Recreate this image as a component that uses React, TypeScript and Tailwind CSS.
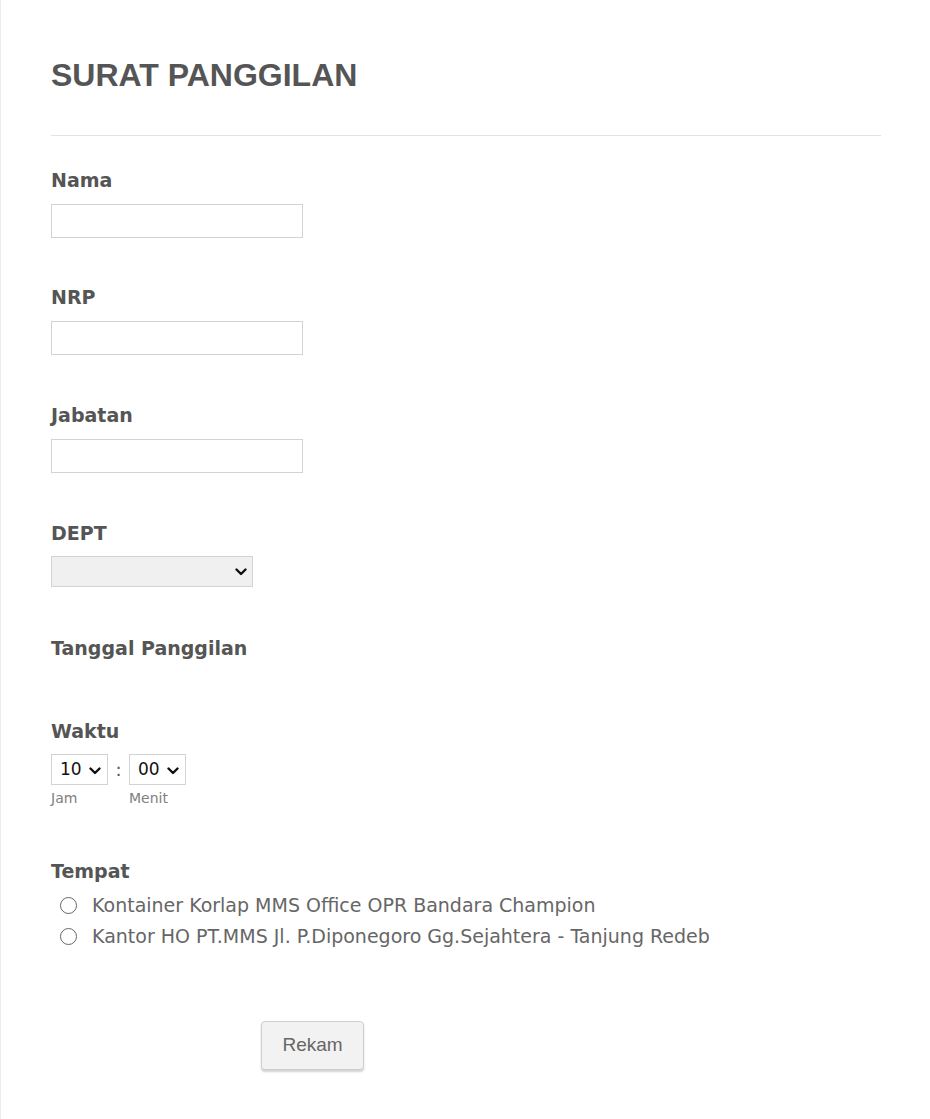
import React from "react";

const labelCls =
  "block text-[19px] leading-[24px] font-bold text-[#555] font-['DejaVu_Sans',Verdana,sans-serif]";

const Chevron = () => (
  <svg viewBox="0 0 12 8" className="w-[12px] h-[8px]" fill="none">
    <polyline points="1.5 1.5 6 6 10.5 1.5" stroke="#111" strokeWidth="2.4" strokeLinecap="round" strokeLinejoin="round" />
  </svg>
);

const TextField = ({ label, top }: { label: string; top: string }) => (
  <div className={top}>
    <label className={labelCls}>{label}</label>
    <input
      type="text"
      className="mt-[12px] block w-[252px] h-[34px] border border-[#d3d3d3] bg-white outline-none"
    />
  </div>
);

const SmallSelect = ({ value }: { value: string }) => (
  <div className="relative w-[57px] h-[31px] border border-[#d3d3d3] bg-white flex items-center">
    <span className="pl-[8px] text-[17px] text-[#111] font-['DejaVu_Sans',Verdana,sans-serif]">{value}</span>
    <span className="absolute right-[6px] top-[12px]">
      <Chevron />
    </span>
  </div>
);

const Radio = ({ text }: { text: string }) => (
  <label className="flex items-center h-[31px] pl-[9px]">
    <span className="w-[17px] h-[17px] rounded-full border border-[#666] bg-white" />
    <span className="ml-[15px] text-[19px] text-[#666] font-['DejaVu_Sans',Verdana,sans-serif]">{text}</span>
  </label>
);

export default function App() {
  return (
    <div className="min-h-[1119px] bg-white border-l border-[#ececec]">
      <form className="pl-[50px] pr-[49px] pt-[56px] pb-[51px] flex flex-col">
        <h1 className="text-[32px] leading-[38px] font-bold text-[#555] font-['Liberation_Sans',Arial,sans-serif]">
          SURAT PANGGILAN
        </h1>
        <div className="mt-[41px] h-px bg-[#e2e2e2]" />

        <TextField label="Nama" top="mt-[32px]" />
        <TextField label="NRP" top="mt-[47px]" />
        <TextField label="Jabatan" top="mt-[48px]" />

        <div className="mt-[48px]">
          <label className={labelCls}>DEPT</label>
          <div className="relative mt-[11px] w-[202px] h-[31px] border border-[#d3d3d3] bg-[#f0f0f0]">
            <span className="absolute right-[5px] top-[11px]">
              <Chevron />
            </span>
          </div>
        </div>

        <div className="mt-[49px] h-[83px]">
          <label className={labelCls}>Tanggal Panggilan</label>
        </div>

        <div>
          <label className={labelCls}>Waktu</label>
          <div className="mt-[11px] flex items-start">
            <div className="flex flex-col">
              <SmallSelect value="10" />
              <span className="mt-[5px] text-[14px] leading-[16px] text-[#808080] font-['DejaVu_Sans',Verdana,sans-serif]">Jam</span>
            </div>
            <span className="w-[21px] h-[31px] flex items-center justify-center text-[18px] text-[#555] font-['DejaVu_Sans',Verdana,sans-serif]">:</span>
            <div className="flex flex-col">
              <SmallSelect value="00" />
              <span className="mt-[5px] text-[14px] leading-[16px] text-[#808080] font-['DejaVu_Sans',Verdana,sans-serif]">Menit</span>
            </div>
          </div>
        </div>

        <div className="mt-[53px]">
          <label className={labelCls}>Tempat</label>
          <div className="mt-[7px] flex flex-col">
            <Radio text="Kontainer Korlap MMS Office OPR Bandara Champion" />
            <Radio text="Kantor HO PT.MMS Jl. P.Diponegoro Gg.Sejahtera - Tanjung Redeb" />
          </div>
        </div>

        <div className="mt-[69px] pl-[210px]">
          <button
            type="button"
            className="w-[103px] h-[49px] rounded-[4px] border border-[#cfcfcf] bg-[#f2f2f2] shadow-[0_2px_2px_rgba(0,0,0,0.18)] text-[19px] text-[#666] font-['Liberation_Sans',Arial,sans-serif]"
          >
            Rekam
          </button>
        </div>
      </form>
    </div>
  );
}
